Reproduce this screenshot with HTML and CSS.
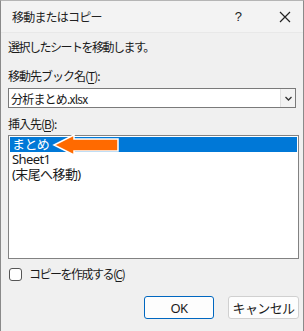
FILE: index.html
```html
<!DOCTYPE html>
<html lang="ja">
<head>
    <meta charset="UTF-8">
    <title>移動またはコピー</title>
    <link rel="stylesheet" href="styles.css">
</head>
<body>
    <div class="dialog">
        <div class="titlebar">
            <span class="title">移動またはコピー</span>
            <span class="help">?</span>
            <svg class="close" width="12" height="12" viewBox="0 0 12 12">
                <path d="M1 1 L11 11 M11 1 L1 11" stroke="#222" stroke-width="1.2" fill="none"/>
            </svg>
        </div>

        <div class="content">
            <div class="text intro">選択したシートを移動します。</div>

            <div class="text">移動先ブック名(<u>T</u>):</div>
            <div class="combo">
                <span class="combo-value">分析まとめ.xlsx</span>
                <span class="combo-btn">
                    <svg width="7" height="5" viewBox="0 0 7 5">
                        <path d="M0.5 1 L3.5 4 L6.5 1" stroke="#333" stroke-width="1.3" fill="none"/>
                    </svg>
                </span>
            </div>

            <div class="text">挿入先(<u>B</u>):</div>
            <div class="listbox">
                <div class="item selected">まとめ</div>
                <div class="item">Sheet1</div>
                <div class="item">(末尾へ移動)</div>

                <svg class="arrow" width="68" height="24" viewBox="0 0 68 24">
                    <path d="M2 12 L22 2 L22 6 L66 6 L66 18 L22 18 L22 22 Z" fill="#ff6a00" stroke="#fff" stroke-width="1.5"/>
                </svg>
            </div>

            <label class="check">
                <span class="box"></span>
                <span class="text check-label">コピーを作成する(<u>C</u>)</span>
            </label>

            <div class="buttons">
                <button class="btn primary">OK</button>
                <button class="btn wide">キャンセル</button>
            </div>
        </div>
    </div>
</body>
</html>
```

FILE: styles.css
```css
body {
    margin: 0;
    background: #fff;
    font-family: "Noto Sans CJK JP", "Noto Sans", sans-serif;
    font-size: 12px;
    color: #1a1a1a;
}

.dialog {
    width: 302px;
    height: 330px;
    border: 1px solid #8a8a8a;
    border-top-color: #b5b5b5;
    background: #f0f0f0;
    display: flex;
    flex-direction: column;
}

.titlebar {
    height: 31px;
    background: #f3f3f3;
    display: flex;
    align-items: center;
    padding: 0 12px 0 11px;
    border-bottom: 1px solid #e8e8e8;
}

.title {
    flex: 1;
    letter-spacing: -0.8px;
    color: #222;
}

.help {
    font-family: "Liberation Sans", sans-serif;
    font-size: 13px;
    margin-right: 37px;
    color: #222;
}

.content {
    padding: 6px 4px 0 7px;
    display: flex;
    flex-direction: column;
    flex: 1;
}

.text {
    line-height: 16px;
    letter-spacing: -1px;
}

.text u {
    text-decoration-thickness: 1px;
    text-underline-offset: 2px;
}

.intro {
    margin-bottom: 13px;
    letter-spacing: -1.5px;
}

.combo {
    margin-top: 4px;
    width: 286px;
    height: 18px;
    border: 1px solid #7a7a7a;
    background: #fff;
    display: flex;
    align-items: center;
}

.combo-value {
    flex: 1;
    padding-left: 2px;
    letter-spacing: -0.8px;
}

.combo-btn {
    width: 14px;
    height: 18px;
    border-left: 1px solid #e0e0e0;
    background: #f3f3f3;
    display: flex;
    align-items: center;
    justify-content: center;
}

.combo + .text {
    margin-top: 8px;
}

.listbox {
    margin-top: 3px;
    width: 291px;
    height: 124px;
    border: 1px solid #828282;
    background: #fff;
    padding: 1px 1px;
    box-sizing: border-box;
    position: relative;
}

.item {
    line-height: 15px;
    padding-left: 2px;
    font-family: "Noto Sans", "Noto Sans CJK JP", sans-serif;
    font-size: 13px;
    letter-spacing: -0.6px;
}

.item.selected {
    background: #0078d7;
    color: #fff;
}

.arrow {
    position: absolute;
    left: 43px;
    top: -3px;
}

.check {
    display: flex;
    align-items: center;
    margin-top: 7px;
    padding-left: 1px;
}

.check-label {
    letter-spacing: -1.5px;
}

.box {
    width: 11px;
    height: 11px;
    border: 1px solid #555;
    border-radius: 3px;
    background: #fff;
    margin-right: 7px;
}

.buttons {
    display: flex;
    justify-content: flex-end;
    gap: 14px;
    margin-top: 14px;
}

.btn {
    width: 70px;
    height: 23px;
    border: 1px solid #d0d0d0;
    border-radius: 3px;
    background: #fdfdfd;
    font-family: "Noto Sans", "Noto Sans CJK JP", sans-serif;
    font-size: 13px;
    letter-spacing: -0.6px;
    color: #1a1a1a;
    padding: 0;
}

.btn.wide {
    width: 71px;
}

.btn.primary {
    border: 1px solid #0067c0;
}
```
